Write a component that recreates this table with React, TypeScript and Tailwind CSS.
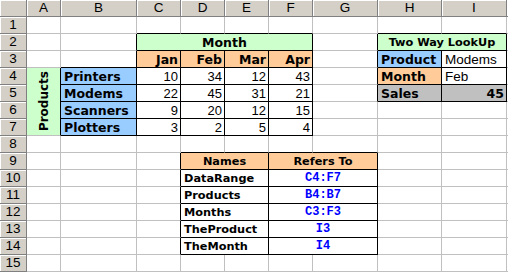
import React from "react";

type Cell = {
  t?: string;
  span?: number;
  rspan?: number;
  bg?: string;
  kind?: "bold" | "small" | "mono" | "num" | "text" | "vert";
  align?: "left" | "right" | "center";
};

const COLS = ["A", "B", "C", "D", "E", "F", "G", "H", "I", ""];

// r1, c1, r2, c2 (A = 1) regions drawn with black borders
const boxes = [
  [2, 3, 7, 6],
  [4, 2, 7, 2],
  [2, 8, 5, 9],
  [9, 4, 14, 7],
];
const boxed = (r: number, c: number) =>
  boxes.some(([r1, c1, r2, c2]) => r >= r1 && r <= r2 && c >= c1 && c <= c2);

const GREEN = "bg-[#ccffcc]";
const ORANGE = "bg-[#ffcc99]";
const BLUE = "bg-[#99ccff]";
const GRAY = "bg-[#c0c0c0]";

const e = (): Cell => ({});
const n = (v: string): Cell => ({ t: v, kind: "num", align: "right" });

const data: Cell[][] = [
  [e(), e(), e(), e(), e(), e(), e(), e(), e(), e()],
  [e(), e(), { t: "Month", span: 4, bg: GREEN, kind: "bold", align: "center" }, e(), { t: "Two Way LookUp", span: 2, bg: GREEN, kind: "small", align: "center" }, e()],
  [
    e(), e(),
    { t: "Jan", bg: ORANGE, kind: "bold", align: "right" },
    { t: "Feb", bg: ORANGE, kind: "bold", align: "right" },
    { t: "Mar", bg: ORANGE, kind: "bold", align: "right" },
    { t: "Apr", bg: ORANGE, kind: "bold", align: "right" },
    e(),
    { t: "Product", bg: BLUE, kind: "bold" },
    { t: "Modems", kind: "text" },
    e(),
  ],
  [
    { t: "Products", rspan: 4, bg: GREEN, kind: "vert", align: "center" },
    { t: "Printers", bg: BLUE, kind: "bold" },
    n("10"), n("34"), n("12"), n("43"), e(),
    { t: "Month", bg: ORANGE, kind: "bold" },
    { t: "Feb", kind: "text" },
    e(),
  ],
  [
    { t: "Modems", bg: BLUE, kind: "bold" },
    n("22"), n("45"), n("31"), n("21"), e(),
    { t: "Sales", bg: GRAY, kind: "bold" },
    { t: "45", bg: GRAY, kind: "bold", align: "right" },
    e(),
  ],
  [{ t: "Scanners", bg: BLUE, kind: "bold" }, n("9"), n("20"), n("12"), n("15"), e(), e(), e(), e()],
  [{ t: "Plotters", bg: BLUE, kind: "bold" }, n("3"), n("2"), n("5"), n("4"), e(), e(), e(), e()],
  [e(), e(), e(), e(), e(), e(), e(), e(), e(), e()],
  [
    e(), e(), e(),
    { t: "Names", span: 2, bg: ORANGE, kind: "small", align: "center" },
    { t: "Refers To", span: 2, bg: ORANGE, kind: "small", align: "center" },
    e(), e(), e(),
  ],
  ...[
    ["DataRange", "C4:F7"],
    ["Products", "B4:B7"],
    ["Months", "C3:F3"],
    ["TheProduct", "I3"],
    ["TheMonth", "I4"],
  ].map(([name, ref]): Cell[] => [
    e(), e(), e(),
    { t: name, span: 2, kind: "small" },
    { t: ref, span: 2, kind: "mono", align: "center" },
    e(), e(), e(),
  ]),
  [e(), e(), e(), e(), e(), e(), e(), e(), e(), e()],
];

const spanCls: Record<number, string> = { 1: "", 2: "col-span-2", 4: "col-span-4" };
const rspanCls: Record<number, string> = { 1: "", 4: "row-span-4" };

const kindCls: Record<string, string> = {
  bold: "font-['DejaVu_Sans',sans-serif] font-bold text-[12.5px] text-black",
  small: "font-['DejaVu_Sans',sans-serif] font-bold text-[11.3px] text-black",
  mono: "font-['Liberation_Mono',monospace] font-bold text-[12px] text-[#0000ff]",
  num: "font-['Liberation_Sans',Arial,sans-serif] text-[13px] text-black",
  text: "font-['Liberation_Sans',Arial,sans-serif] text-[13.5px] text-black",
  vert: "font-['DejaVu_Sans',sans-serif] font-bold text-[12px] text-black",
};

const alignCls = { left: "justify-start pl-[3px]", right: "justify-end pr-[2px]", center: "justify-center" };

const Header = ({ label }: { label: string }) => (
  <div className="flex items-center justify-center bg-[#d4d0c8] border-r border-b border-[#808080] shadow-[inset_1px_1px_0_#ffffff] font-['Liberation_Sans',Arial,sans-serif] text-[13.5px] leading-none text-black">
    {label}
  </div>
);

export default function App() {
  const out: React.ReactNode[] = [];
  out.push(<Header key="corner" label="" />);
  COLS.forEach((c) => out.push(<Header key={"h" + c} label={c} />));

  const covered = new Set<string>();
  data.forEach((row, ri) => {
    const r = ri + 1;
    out.push(<Header key={"r" + r} label={String(r)} />);
    let c = 1;
    row.forEach((cell, ci) => {
      while (covered.has(`${r}:${c}`)) c++;
      const span = cell.span ?? 1;
      const rspan = cell.rspan ?? 1;
      for (let i = 1; i < rspan; i++) for (let j = 0; j < span; j++) covered.add(`${r + i}:${c + j}`);
      const cEnd = c + span - 1;
      const rEnd = r + rspan - 1;
      let rightBlack = false;
      for (let i = r; i <= rEnd; i++) if (boxed(i, cEnd) || boxed(i, cEnd + 1)) rightBlack = true;
      let bottomBlack = false;
      for (let j = c; j <= cEnd; j++) if (boxed(rEnd, j) || boxed(rEnd + 1, j)) bottomBlack = true;
      const cls = [
        "flex overflow-hidden whitespace-nowrap border-r border-b leading-[15px]",
        cell.kind === "vert" ? "items-center" : "items-end",
        rightBlack ? "border-r-black" : "border-r-[#c0c0c0]",
        bottomBlack ? "border-b-black" : "border-b-[#c0c0c0]",
        spanCls[span],
        rspanCls[rspan],
        cell.bg ?? "bg-white",
        cell.kind ? kindCls[cell.kind] : "",
        alignCls[cell.align ?? "left"],
      ].join(" ");
      out.push(
        <div key={`${r}-${ci}`} className={cls}>
          {cell.kind === "vert" ? (
            <span className="[writing-mode:vertical-rl] rotate-180 leading-[14px]">{cell.t}</span>
          ) : (
            cell.t
          )}
        </div>
      );
      c += span;
    });
  });

  return (
    <div className="w-[508px] h-[272px] overflow-hidden bg-white">
      <div className="grid grid-cols-[27px_34px_76px_44px_44px_44px_44px_65px_64px_65px_30px] grid-rows-[repeat(16,17px)] w-[538px]">
        {out}
      </div>
    </div>
  );
}
